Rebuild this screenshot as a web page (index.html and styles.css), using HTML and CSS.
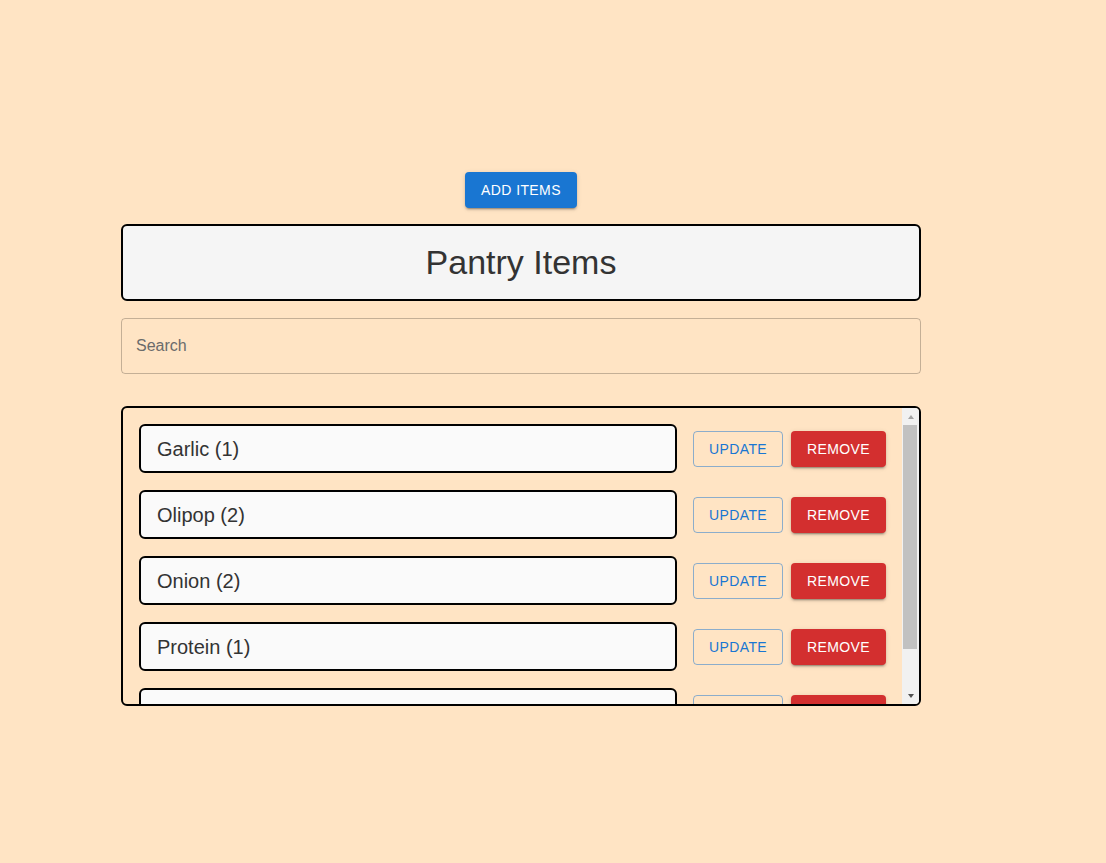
FILE: index.html
```html
<!DOCTYPE html>
<html>
<head>
<meta charset="utf-8">
<link rel="stylesheet" href="styles.css">
</head>
<body>
<main class="page">
  <button class="btn-add">ADD ITEMS</button>
  <div class="header"><h1>Pantry Items</h1></div>
  <div class="search"><input type="text" placeholder="Search"></div>
  <div class="list">
    <div class="list-content">
      <div class="row"><div class="item">Garlic (1)</div><button class="btn-update">UPDATE</button><button class="btn-remove">REMOVE</button></div>
      <div class="row"><div class="item">Olipop (2)</div><button class="btn-update">UPDATE</button><button class="btn-remove">REMOVE</button></div>
      <div class="row"><div class="item">Onion (2)</div><button class="btn-update">UPDATE</button><button class="btn-remove">REMOVE</button></div>
      <div class="row"><div class="item">Protein (1)</div><button class="btn-update">UPDATE</button><button class="btn-remove">REMOVE</button></div>
      <div class="row"><div class="item">Tomato (3)</div><button class="btn-update">UPDATE</button><button class="btn-remove">REMOVE</button></div>
    </div>
    <div class="scrollbar">
      <div class="sb-btn"><span class="arrow-up"></span></div>
      <div class="sb-track"><div class="sb-thumb"></div></div>
      <div class="sb-btn"><span class="arrow-down"></span></div>
    </div>
  </div>
</main>
</body>
</html>
```
FILE: styles.css
```css
html, body {
  margin: 0;
  padding: 0;
  background: #ffe4c4;
  font-family: "Liberation Sans", Arial, sans-serif;
}
.page {
  width: 800px;
  margin-left: 121px;
  padding-top: 172px;
  display: flex;
  flex-direction: column;
  align-items: center;
}
button {
  font-family: "Liberation Sans", Arial, sans-serif;
  font-size: 14px;
  font-weight: 500;
  letter-spacing: 0.4px;
  border-radius: 4px;
  cursor: pointer;
  box-sizing: border-box;
  height: 36px;
}
.btn-add {
  width: 112px;
  background: #1976d2;
  color: #fff;
  border: none;
  box-shadow: 0 3px 1px -2px rgba(0,0,0,0.2), 0 2px 2px 0 rgba(0,0,0,0.14), 0 1px 5px 0 rgba(0,0,0,0.12);
}
.header {
  margin-top: 16px;
  width: 100%;
  height: 77px;
  box-sizing: border-box;
  border: 2px solid #000;
  border-radius: 6px;
  background: #f5f5f5;
  display: flex;
  align-items: center;
  justify-content: center;
}
.header h1 {
  margin: 0;
  font-size: 34px;
  font-weight: 400;
  color: #333;
}
.search {
  margin-top: 17px;
  width: 100%;
}
.search input {
  width: 100%;
  height: 56px;
  box-sizing: border-box;
  border: 1px solid rgba(0,0,0,0.23);
  border-radius: 4px;
  background: transparent;
  padding: 0 14px;
  font-family: "Liberation Sans", Arial, sans-serif;
  font-size: 16px;
  color: #333;
  outline: none;
}
.search input::placeholder {
  color: #6b6b6b;
}
.list {
  margin-top: 32px;
  width: 100%;
  height: 300px;
  box-sizing: border-box;
  border: 2px solid #000;
  border-radius: 6px;
  overflow: hidden;
  display: flex;
}
.list-content {
  flex: 1;
  overflow: hidden;
  padding: 16px;
  display: flex;
  flex-direction: column;
  gap: 17px;
}
.scrollbar {
  width: 17px;
  background: #f1f1f1;
  display: flex;
  flex-direction: column;
}
.sb-btn {
  height: 17px;
  display: flex;
  align-items: center;
  justify-content: center;
  flex-shrink: 0;
}
.arrow-up {
  width: 0;
  height: 0;
  border-left: 3.5px solid transparent;
  border-right: 3.5px solid transparent;
  border-bottom: 4px solid #a3a3a3;
}
.arrow-down {
  width: 0;
  height: 0;
  border-left: 3.5px solid transparent;
  border-right: 3.5px solid transparent;
  border-top: 4px solid #505050;
}
.sb-track {
  flex: 1;
  padding: 0 2px 0 1px;
}
.sb-thumb {
  height: 224px;
  background: #c1c1c1;
}
.row {
  display: flex;
  align-items: center;
  flex-shrink: 0;
}
.item {
  flex: 1;
  height: 49px;
  box-sizing: border-box;
  border: 2px solid #000;
  border-radius: 6px;
  background: #fafafa;
  display: flex;
  align-items: center;
  padding: 1px 16px 0;
  font-size: 20px;
  color: #333;
}
.btn-update {
  margin-left: 16px;
  width: 90px;
  background: transparent;
  color: #1976d2;
  border: 1px solid rgba(25,118,210,0.5);
}
.btn-remove {
  margin-left: 8px;
  width: 95px;
  background: #d32f2f;
  color: #fff;
  border: none;
  box-shadow: 0 3px 1px -2px rgba(0,0,0,0.2), 0 2px 2px 0 rgba(0,0,0,0.14), 0 1px 5px 0 rgba(0,0,0,0.12);
}
```
